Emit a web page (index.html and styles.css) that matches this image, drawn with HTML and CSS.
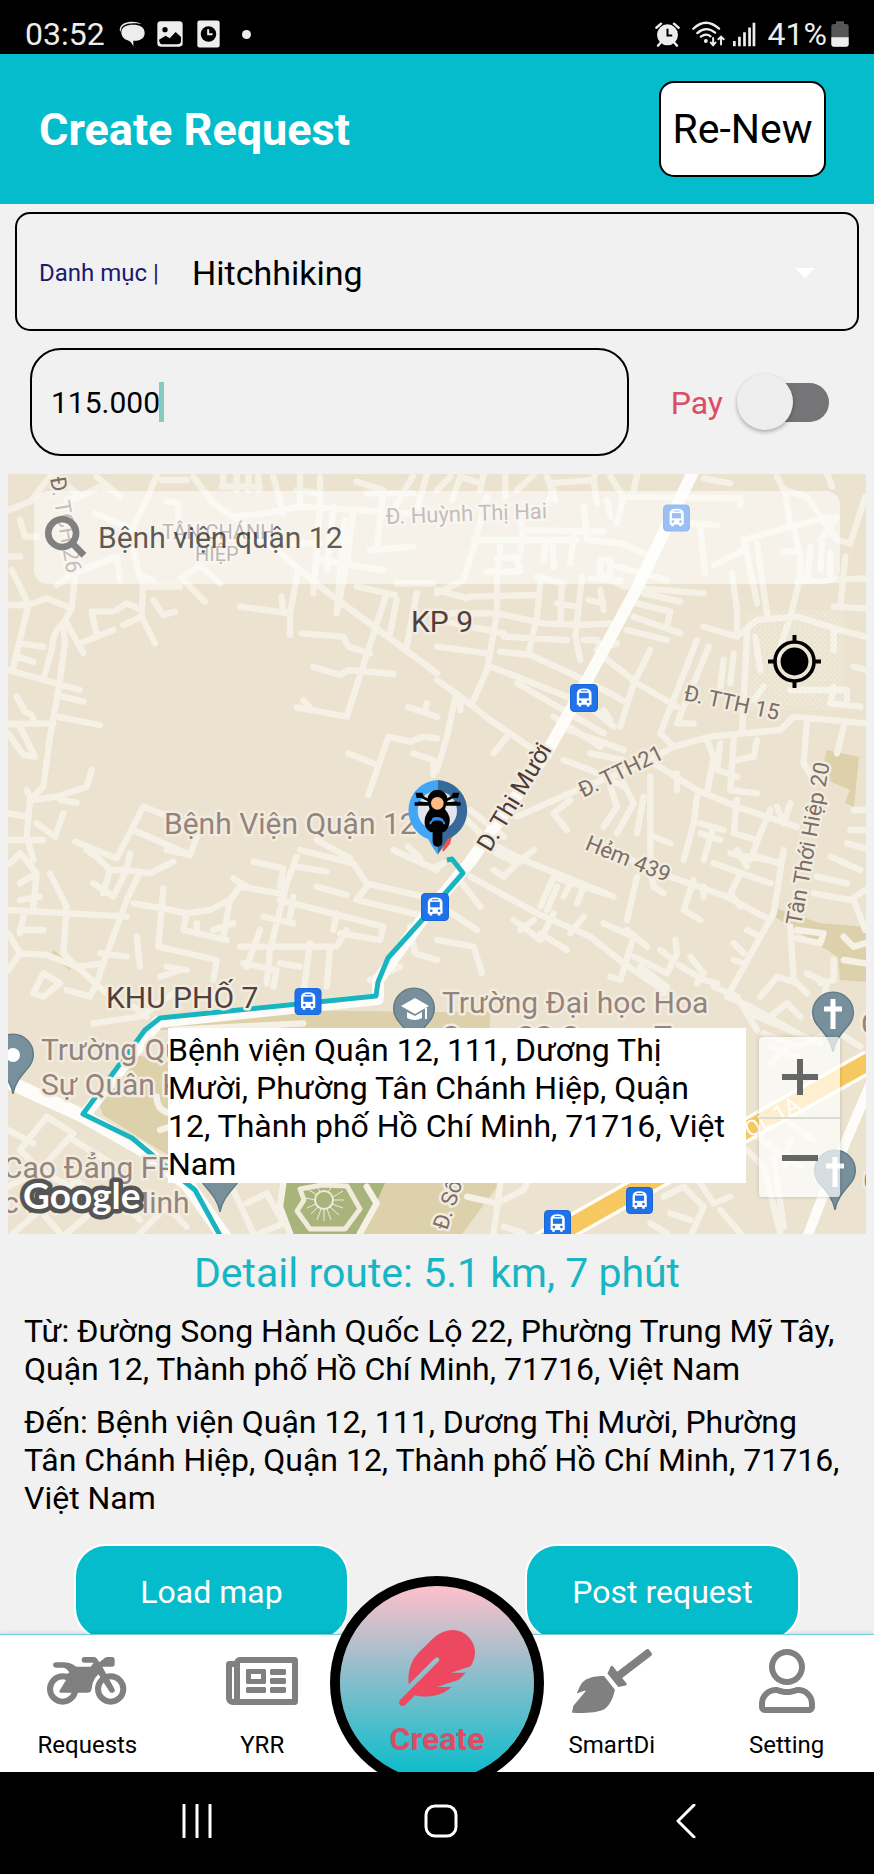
FILE: index.html
```html
<!DOCTYPE html>
<html lang="vi">
<head>
<meta charset="utf-8">
<meta name="viewport" content="width=device-width, initial-scale=1">
<title>Create Request</title>
<link rel="stylesheet" href="styles.css">
</head>
<body>
<div class="app">
  <div class="status">
    <div class="status-group">
      <span class="clock">03:52</span>
      <svg class="s-chat" viewBox="0 0 78 78" aria-hidden="true"><path d="M2 28C2 8 22 2 40 2C54 2 62 5 68 9C56 6 24 4 12 15C6 20 6 26 5 32Z"/><path d="M42 11C62 11 77 18 77 36C77 50 66 58 52 59L43 59L43 77C40 68 34 60 24 57C12 53 7 44 7 33C8 18 22 11 42 11Z"/></svg>
      <svg class="s-pic" viewBox="0 0 78 78" aria-hidden="true"><rect x="1" y="1" width="76" height="76" rx="10"/><circle cx="24" cy="26" r="8" fill="#000"/><path d="M6 56L26 44L38 52L56 33L72 48V60Q72 70 60 70H16Q8 70 6 56Z" fill="#000"/></svg>
      <svg class="s-rec" viewBox="0 0 68 82" aria-hidden="true"><rect x="1" y="1" width="66" height="80" rx="7"/><circle cx="34" cy="41" r="23" fill="#000"/><path d="M33 27V42H46" fill="none" stroke="#ededed" stroke-width="6"/></svg>
      <span class="s-dot"></span>
    </div>
    <div class="status-group right">
      <svg class="s-alarm" viewBox="0 0 72 74" aria-hidden="true"><circle cx="36" cy="38" r="31"/><path d="M3 17L17 5M69 17L55 5M17 60L8 70M55 60L64 70" stroke="#ededed" stroke-width="7" stroke-linecap="round"/><path d="M36 20V40H50" fill="none" stroke="#000" stroke-width="6"/></svg>
      <svg class="s-wifi" viewBox="0 0 100 76" aria-hidden="true"><g fill="none" stroke="#ededed" stroke-width="7" stroke-linecap="round"><path d="M4 22Q42 -14 82 22M16 35Q43 12 70 34M27 46Q43 34 56 45"/><path d="M64 50V72M57 64L64 72L71 64M88 70V46M80 54L88 46L96 54" stroke-width="6"/></g><circle cx="42" cy="59" r="6"/></svg>
      <svg class="s-signal" viewBox="0 0 68 74" aria-hidden="true"><path d="M0 56H8V72H0ZM15 44H23V72H15ZM30 30H38V72H30ZM45 16H53V72H45ZM58 2H66V72H58Z"/></svg>
      <span class="battery-text">41%</span>
      <svg class="s-batt" viewBox="0 0 54 78" aria-hidden="true"><path d="M15 1H39V9H46Q53 9 53 17V70Q53 77 46 77H8Q1 77 1 70V17Q1 9 8 9H15Z" fill="#565656"/><path d="M1 49H53V70Q53 77 46 77H8Q1 77 1 70Z"/></svg>
    </div>
  </div>

  <header class="topbar">
    <h1>Create Request</h1>
    <button class="renew" type="button">Re-New</button>
  </header>

  <main class="content">
    <div class="category">
      <label for="category">Danh mục |</label>
      <select id="category"><option>Hitchhiking</option></select>
      <span class="arrow" aria-hidden="true"></span>
    </div>

    <div class="price-row">
      <div class="price"><input id="price" type="text" value="115.000" aria-label="Price"><span class="caret"></span></div>
      <label class="pay" for="pay">Pay</label>
      <input class="switch" id="pay" type="checkbox">
    </div>

    <section class="map" aria-label="Map">
      <svg class="map-canvas" viewBox="8 474 858 760" preserveAspectRatio="xMidYMid slice">
        <defs>
          <symbol id="bus" viewBox="0 0 82 82">
            <rect width="82" height="82" rx="13" fill="#1967d9"/><rect x="3" y="3" width="76" height="76" rx="10" fill="#1f72ea"/>
            <path d="M20 28Q20 13 41 13Q63 13 63 28V61H57V66H49V61H33V66H25V61H20Z" fill="#fff"/>
            <path d="M27 26H55V42H27Z" fill="#1f72ea"/><circle cx="30" cy="52" r="4" fill="#1f72ea"/><circle cx="53" cy="52" r="4" fill="#1f72ea"/><path d="M32 20H51" stroke="#1f72ea" stroke-width="3"/>
          </symbol>
          <symbol id="pin" viewBox="0 0 128 186">
            <path d="M64 184C58 150 38 128 20 107C8 94 2 80 2 64A62 62 0 0 1 126 64C126 80 120 94 108 107C90 128 70 150 64 184Z" fill="#78909c" stroke="#5d7683" stroke-width="4"/>
          </symbol>
          <pattern id="mesh" width="5" height="5" patternUnits="userSpaceOnUse"><path d="M0 0L5 5M5 0L0 5" stroke="#fff" stroke-width="1" opacity=".25"/></pattern>
        </defs>
        <rect x="8" y="474" width="858" height="760" fill="#ebe3cf"/>

        <g fill="#ddd1ab">
          <path d="M827 750L859 757L854 807L845 803L850 790L820 777Z"/>
          <path d="M53 950L73 965L70 970L50 957Z"/>
          <path d="M270 1010L437 1012L490 1012V1030H160L158 1020Z"/>
          <path d="M98 1100L137 1055L168 1062V1155L103 1115Z"/>
          <path d="M820 923L866 927V982L840 980L838 957L775 917L778 909Z"/>
          <path d="M380 1183L500 1183L462 1234H360L375 1200Z"/>
        </g>
        <path d="M285 1183H385L362 1234H290L278 1205Z" fill="#a9b37c"/>

        <g class="road">
          <g transform="translate(0 470) scale(.33333)">
            <path d="M25 405L85 405L140 385L215 415L225 320M85 405L60 350L35 300M25 260H60M85 405L40 590M215 415L190 460Q160 480 155 540L130 630M190 460L195 520L175 660L150 800L130 950L90 990L80 1100L100 1170M200 460L250 550M335 425H275L290 495M240 520L340 480M350 420L380 400L425 420M370 465L425 440L465 520M430 320L425 440M460 390L490 435L525 425M25 600L240 660M170 675L250 695M60 520L130 530M55 560L100 575M25 762L160 760M170 740L300 765M50 680L75 725L95 735L105 760M25 790L70 855L105 860L60 770M80 960L95 990L170 980L260 950L275 900M180 990L230 998M25 1030L80 1040M190 1030L165 1100L110 1060M25 1110L130 1110M350 1165L430 1010L600 1075L570 1155L400 1080M225 1115L350 1165"/>
            <path d="M200 320Q320 270 350 260L360 330M170 345L210 320M440 350H540M545 325L615 395M545 325L600 285L660 340M400 240L420 320L460 330M720 410L870 430L895 300M845 380L850 425M870 430L870 495M905 490L1030 500L1045 530L1110 550M940 590L1020 615L1045 600L1180 612M890 712L1040 740L1160 370M910 690L930 715M1045 850L1130 885M1105 975L1165 800L1230 815L1270 800L1311 805M1225 712L1311 740M1280 700L1275 725M1240 850L1311 875M1300 880V915"/>
            <path d="M25 120L90 95L150 20M200 90L240 80L160 10M240 80L300 50L330 60M290 20L360 80M470 15L440 90L400 170M580 20L640 100L700 140L800 130L900 110L1150 125L1311 140M285 130L400 180M60 150L75 200L110 200M485 30H560M500 95L535 100V150M700 140L830 240L960 350L1311 610M665 50H780M670 15V50M710 15V60M745 15V60M775 15V60M820 20L850 130M900 20V110M890 60L960 70M960 20V110L940 370M880 220H960M1000 110L980 300M1035 150L1010 425M1060 120L1040 280L1010 430M1070 35L1150 60L1130 240M1240 15L1180 120M1280 15L1250 120M960 270L1150 300M1070 350L1185 375M1190 390L1170 490M1250 370L1220 530M1100 70H1240M1190 340H1300M1110 240L1240 230M950 1110L1050 1165M1225 1130L1260 1165"/>
          </g>
          <g transform="translate(437 470) scale(.33333)">
            <path d="M0 60L40 20M45 90L70 20L130 40M140 10L130 60M205 10V80M330 20L355 90M290 15L240 60M340 40L470 30L475 10M470 30L480 100M520 20L560 80L910 85V105M560 80L540 160M600 15L590 60M800 25L880 40M150 80L110 230L80 330L0 370M240 120L260 185L250 240M255 180L500 185M110 210H420M330 100L350 60M440 110L450 210M510 90L520 140M410 200L400 280M325 210L320 270M345 215L350 290M190 230L180 330M180 265L250 260M150 305L250 305L240 270M460 210L550 220L650 260M300 320L380 340M460 325L550 330M490 270V310L520 330L560 350L800 370M490 270H520V310M540 290L690 330M620 370L730 395M600 400L700 425L690 470M590 440L730 490M570 480L690 510M100 380L300 375M0 360L90 385M20 430H180L320 460L430 465L520 460M0 450L200 490M180 330V430L150 600L110 690M310 340L300 440L275 550M375 340L370 460M435 320L415 500L430 570M360 400L420 410M200 500L390 510M0 530L150 550M190 545L280 555L400 610L520 670L570 700M440 510H480L500 560L600 640L720 710M480 540L540 520M640 540L590 640L550 770M160 590L240 620L440 700M240 640L500 790M370 770L560 840M350 740L490 830M0 630L70 680L160 750L320 860M55 680L30 800L0 900M210 800L170 850M70 690V720M490 360L500 420M455 390L500 400M470 720L530 770M500 720L520 750"/>
            <path d="M780 510L670 790L710 830M815 530L720 760L770 760M860 570L850 650M890 550L880 640M710 830L820 800L1030 780L1070 740L1285 760M1110 750L1100 880L1130 930M1220 770L1200 850M915 790L930 480M800 470L900 500L960 450L1080 440L1210 480L1285 500M885 310L900 420V500M960 220L990 430M920 210L940 300L960 400M920 210L1060 170L1180 140M790 170L805 310M760 160L840 165M920 240L830 285M1060 170L1045 60L1110 80L1200 210L1240 220L1285 80M1040 60L1020 20M1170 10L1185 50M1070 170L1090 260V330M1120 230L1110 330M1155 220L1150 300M1180 250V320M1040 245H1080M1150 210L1200 140M1080 335L1285 325M1085 340L1060 440L1020 560M1225 260L1210 410M1190 410L1285 415M1190 480V540M1250 590L1285 600M1190 650L1180 700L1270 710M1060 660H1230V700M955 500L970 600M950 690L980 650"/>
            <path d="M240 1040L420 960L600 890L710 830M350 1030L400 990M350 1030L390 1080M380 870L460 900L560 950M460 850L560 870M560 940L590 1000L540 1090M520 950L540 1010L500 1070M640 920V1170M620 980L600 1090M650 880L780 960L900 1010L1080 1070M780 980L770 1060L740 1170M720 910V960M810 810L830 860L810 970M850 820L840 900L900 920M890 810L880 960L960 970M960 810L950 860L900 870M900 990L890 1090L960 1110M1000 1020L970 1090L940 1170M790 1060L860 1080M790 1090L850 1110M830 1070L800 1170M1060 1000L1040 1060L1020 1010M880 1150L990 1170M650 1100L700 1120M1250 1020H1285M1240 1080H1285M1230 1120L1285 1135M100 1020L200 1100M80 1040L160 1120L260 1170"/>
          </g>
          <g transform="translate(0 850) scale(.33333)">
            <path d="M70 20L110 70L60 100M25 180L380 200M110 70L100 170M150 70L200 170L190 310L230 350L320 430M25 250L60 310L140 315M60 310L25 360M140 315L230 350L310 340M260 0L290 20L330 60H380L390 10M330 60L310 130M280 100L340 140L380 60L450 70L520 35M420 65L380 150L310 340L290 400M490 115L475 290L650 330L640 390M400 160L490 175L560 190L630 180L690 150L720 110L840 130M700 85L740 110M560 190L550 240L680 270M690 150L670 260M890 20L860 100L810 300L800 400M760 35L850 55L840 110M890 50L980 65M840 150L1150 230L1140 270L1020 250M950 110L1040 135M900 0L1060 40L1100 100L1311 150M1180 0L1311 60M1100 110L1070 150L1280 200M720 290H1010L1040 240M780 240L740 350M930 280L910 430M990 300L980 410M730 340L830 360L820 410M840 340L900 350M410 260L420 350M300 310L380 320M500 350L560 360M480 380L540 360M130 370L180 400L130 440L100 430L130 370M200 420L270 440L290 400M60 240L130 240M70 200L60 250M640 240L700 220M590 220V250M790 200L880 220M880 140L870 200M1010 190L1000 240M400 470L440 500M280 520L420 500L520 430M500 0L570 15M30 40L60 10M60 150L120 140M1230 230L1245 310L1311 330M1110 390L1200 350"/>
            <path d="M25 840L100 880M60 900L140 800L220 850L120 960ZM220 870L350 950M25 1010L120 960L210 1010M150 1060L230 990L330 1080M200 1150L340 1030L420 1110M40 1150L120 1080L180 1150M420 1150L500 1070L560 1130M470 740Q470 780 510 790M510 830L480 840M700 1020L760 1150M740 1060L800 1030L850 1120L780 1150M520 540L910 520M850 1000L840 1070L870 1150M1100 1010L1130 1060L1080 1150"/>
          </g>
          <g transform="translate(437 850) scale(.33333)">
            <path d="M60 80L130 170M0 160L120 240M100 80L300 190L460 260L560 340L680 420M180 10L240 40L200 80L170 60M240 40L290 0M260 30L530 140M310 170L350 80L500 130M330 180L360 110M380 140L400 100M420 160L440 110M230 210L310 270L350 190M250 240L290 210M310 250L390 300M400 250L440 200M500 220L590 260L550 390L520 380M570 240L630 290M600 80L570 210M640 60L650 110L680 130M560 20L700 80L870 140L1000 210M770 90L740 180L790 210M800 110V140M910 70L880 130L910 170M830 40L1000 100M1040 0L1010 190L870 440M900 0L930 50M960 20L1030 40M590 320L690 370L720 310L715 270M670 300L710 330M610 350L690 410L680 430M760 320L800 370L780 400M725 345L800 390L840 400M930 240L970 260M890 280L920 310M890 330L920 340M870 440L940 470L1100 560M830 410L900 440L960 540M1060 230L1070 390L1110 430M1080 240L1160 250L1150 280L1080 265M1220 260L1250 290L1285 280M1180 20L1270 60M1140 80L1230 100M1130 130L1240 150L1285 120M1250 150L1285 240M1220 330L1285 340M1190 330V390L1150 400M1110 370L1170 400L1160 440M970 440L1020 380L1080 400M1000 500L1050 460L1090 500M940 490L1150 580M980 550L1080 590L1150 560M1000 590L1080 620M0 270L110 290L135 370M1000 640L1060 580M1130 500L1270 590M0 50L20 40"/>
            <path d="M170 1150L190 1000M90 1040L180 1060L260 1020L270 1000M200 1130L260 1150M680 1040L740 1010L800 1070L760 1160M790 1000L830 1060L880 1040M700 1090L760 1110M930 900L980 950L1030 1150M1010 920L1040 1130M1060 870L1040 950M1060 820L1130 870M960 860L1090 950M640 1120L690 1150M850 1080L910 1150"/>
          </g>
        </g>

        <path d="M300 1189L322 1185L347 1186L360 1209L345 1229H310L297 1211L304 1200Z" fill="#a9b37c" stroke="#f1ebdc" stroke-width="5" stroke-linejoin="round"/>
        <g stroke="#f1ebdc" stroke-width="1" fill="none"><circle cx="324" cy="1200" r="9" fill="#a9b37c" stroke-width="2"/><path d="M315 1200L306 1198M316 1204L307 1208M318 1207L311 1214M321 1209L317 1220M324 1209V1221M327 1209L331 1220M330 1207L339 1215M332 1204L343 1208M333 1200L344 1200M333 1197L343 1191M317 1195L309 1190M320 1192L318 1188M328 1192L331 1188"/></g>

        <g fill="none" stroke-linejoin="round">
          <path d="M694 470L636 590L584 686L546 754L470 862L424 917L378 980V999L158 1022L83 1117" stroke="#fdfcf8" stroke-width="12"/>
          <path d="M0 1078L83 1116L143 1150L187 1184L227 1240" stroke="#fdfcf8" stroke-width="14"/>
          <path d="M806 1240L824 1193L870 1085" stroke="#fdfcf8" stroke-width="10"/>
          <path d="M540 1244L653 1180L750 1128L870 1061" stroke="#fffdf5" stroke-width="24"/>
          <path d="M540 1244L653 1180L750 1128L870 1061" stroke="#f8c860" stroke-width="17"/>
          <path d="M447 860L452 859L463 873L422 920L388 958L378 982L376 996L160 1018L145 1030L83 1114L132 1138L180 1178L195 1190L222 1239" stroke="#18b5c1" stroke-width="5"/>
        </g>

        <g class="poi-pins">
          <use href="#pin" x="393" y="987" width="42" height="62"/><path d="M401 1006L415 998L429 1006L415 1014ZM407 1012V1018Q415 1022 422 1018V1012L415 1016Z" fill="#fff"/><path d="M426 1008V1019" stroke="#fff" stroke-width="2"/>
          <use href="#pin" x="812" y="991" width="42" height="62"/><path d="M833 999V1029M824 1009H842" stroke="#fff" stroke-width="5"/>
          <use href="#pin" x="814" y="1149" width="42" height="62"/><path d="M835 1157V1187M826 1166H844" stroke="#fff" stroke-width="5"/>
          <use href="#pin" x="-8" y="1033" width="42" height="62"/><circle cx="13" cy="1055" r="7" fill="#fff"/>
          <use href="#pin" x="199" y="1151" width="42" height="62"/>
        </g>
        <use href="#bus" x="663" y="504" width="27" height="28"/>
        <use href="#bus" x="570" y="684" width="28" height="28"/>
        <use href="#bus" x="421" y="893" width="28" height="28"/>
        <use href="#bus" x="294" y="988" width="28" height="27"/>
        <use href="#bus" x="626" y="1187" width="27" height="27"/>
        <use href="#bus" x="544" y="1210" width="27" height="27"/>
        <rect x="745" y="610" width="100" height="100" fill="url(#mesh)"/>

        <g class="map-text">
          <text class="place" x="411" y="632">KP 9</text>
          <text class="place" x="106" y="1008">KHU PHỐ 7</text>
          <text class="poi" x="164" y="834">Bệnh Viện Quận 12</text>
          <text class="poi" x="442" y="1013">Trường Đại học Hoa</text>
          <text class="poi" x="442" y="1047">Sen - CS Quang Trung</text>
          <text class="poi" x="41" y="1060">Trường Quân</text>
          <text class="poi" x="41" y="1095">Sự Quân Khu 7</text>
          <text class="poi" x="3" y="1178">Cao Đẳng FPT</text>
          <text class="poi" x="3" y="1213">c Hồ Chí Minh</text>
          <text class="poi" x="861" y="1034">C</text>
          <text class="poi" x="863" y="1191">C</text>
          <text class="area" x="162" y="539">TÂN CHÁNH</text>
          <text class="area" x="195" y="561">HIỆP</text>
          <text class="street" transform="translate(386 524) rotate(-2)">Đ. Huỳnh Thị Hai</text>
          <text class="street" transform="translate(50 478) rotate(80)">Đ. TCH 26</text>
          <text class="street" transform="translate(683 700) rotate(12)">Đ. TTH 15</text>
          <text class="street" transform="translate(583 798) rotate(-26)">Đ. TTH21</text>
          <text class="street" transform="translate(584 849) rotate(22)">Hẻm 439</text>
          <text class="street" transform="translate(801 926) rotate(-80)">Tân Thới Hiệp 20</text>
          <text class="street dark" transform="translate(490 853) rotate(-59)">D. Thị Mười</text>
          <text class="street" transform="translate(447 1231) rotate(-72)">Đ. Số 5</text>
          <text class="route" transform="translate(750 1138) rotate(-29)">QL 1A</text>
        </g>

        <path d="M449 829L443 848Q441 852 444 851L450 844L454 829Z" fill="#ef5350"/>
        <g transform="translate(380 760) scale(.33333)">
          <path d="M173 60A92 92 0 0 0 145 238Q156 262 173 284Z" fill="#42a5f5"/><path d="M173 60A92 92 0 0 1 202 238Q190 262 173 284Z" fill="#37699a"/>
          <circle cx="172" cy="152" r="59" fill="#e4e4ed"/>
          <path d="M115 128L150 132M231 128L194 132M115 105L148 122M229 105L196 122" stroke="#000" stroke-width="8"/><path d="M106 98H127L133 114H110ZM238 98H219L212 114H234ZM104 127H147V137H104ZM197 127H242V137H197Z"/>
          <path d="M142 120A29 29 0 0 1 203 120L195 148Q214 170 208 192Q203 211 191 217H153Q137 208 134 192Q131 170 149 148Z"/>
          <circle cx="172" cy="130" r="19" fill="#ffb983"/><path d="M157 178Q172 170 188 180" fill="none" stroke="#328ce0" stroke-width="7"/><path d="M151 193Q151 180 172 178Q193 180 193 193" fill="none" stroke="#328ce0" stroke-width="6"/>
          <rect x="158" y="188" width="29" height="72" rx="14"/>
        </g>
        <text class="google" x="23" y="1209">Google</text>
      </svg>

      <div class="search">
        <svg viewBox="0 0 130 130" aria-hidden="true"><circle cx="52" cy="52" r="42"/><path d="M82 82L118 119"/></svg>
        <input type="text" value="Bệnh viện quận 12" aria-label="Search place">
      </div>
      <button class="locate" type="button" aria-label="My location">
        <svg viewBox="0 0 160 160"><circle cx="80" cy="80" r="42"/><circle cx="80" cy="80" r="59" fill="none" stroke="#000" stroke-width="11"/><path d="M80 0V20M80 140V160M0 80H20M140 80H160" stroke="#000" stroke-width="12"/></svg>
      </button>
      <div class="address">Bệnh viện Quận 12, 111, Dương Thị Mười, Phường Tân Chánh Hiệp, Quận 12, Thành phố Hồ Chí Minh, 71716, Việt Nam</div>
      <div class="zoom">
        <button type="button" aria-label="Zoom in"><svg viewBox="0 0 36 36"><path d="M0 18H36M18 0V36"/></svg></button>
        <button type="button" aria-label="Zoom out"><svg viewBox="0 0 36 36"><path d="M0 18H36"/></svg></button>
      </div>
    </section>

    <h2 class="route-title">Detail route: 5.1 km, 7 phút</h2>
    <div class="details">
      <p>Từ: Đường Song Hành Quốc Lộ 22, Phường Trung Mỹ Tây, Quận 12, Thành phố Hồ Chí Minh, 71716, Việt Nam</p>
      <p>Đến: Bệnh viện Quận 12, 111, Dương Thị Mười, Phường Tân Chánh Hiệp, Quận 12, Thành phố Hồ Chí Minh, 71716, Việt Nam</p>
    </div>
    <div class="actions">
      <button type="button">Load map</button>
      <button type="button">Post request</button>
    </div>
  </main>

  <nav class="tabs">
    <a href="#requests"><svg viewBox="144 358 240 192" aria-hidden="true"><g fill="none" stroke="#808080" stroke-width="18"><circle cx="191" cy="478" r="38"/><circle cx="335" cy="478" r="38"/></g><path d="M170 398H192Q215 398 232 411H275L284 399H256Q248 399 248 391Q248 382 256 382H285Q291 382 294 387L301 398L318 384Q320 382 325 382H339Q347 382 347 390V403Q347 411 339 411H310L346 477Q350 484 344 488Q337 492 332 486L298 434Q285 446 281 460L277 482Q275 489 267 489H186Q180 489 181 484L207 441Q199 430 211 429Q205 415 192 414H170Q162 413 162 406Q162 399 170 398Z"/></svg><span>Requests</span></a>
    <a href="#yrr"><svg viewBox="0 0 576 512" aria-hidden="true"><path d="M552 64H112c-20.858 0-38.643 13.377-45.248 32H24c-13.255 0-24 10.745-24 24v272c0 30.928 25.072 56 56 56h496c13.255 0 24-10.745 24-24V88c0-13.255-10.745-24-24-24zM48 392V144h16v248c0 4.411-3.589 8-8 8s-8-3.589-8-8zm480 8H111.422c.374-2.614.578-5.283.578-8V112h416v288zM172 280h136c6.627 0 12-5.373 12-12v-96c0-6.627-5.373-12-12-12H172c-6.627 0-12 5.373-12 12v96c0 6.627 5.373 12 12 12zm28-80h80v40h-80v-40zm-40 140v-24c0-6.627 5.373-12 12-12h136c6.627 0 12 5.373 12 12v24c0 6.627-5.373 12-12 12H172c-6.627 0-12-5.373-12-12zm192 0v-24c0-6.627 5.373-12 12-12h104c6.627 0 12 5.373 12 12v24c0 6.627-5.373 12-12 12H364c-6.627 0-12-5.373-12-12zm0-144v-24c0-6.627 5.373-12 12-12h104c6.627 0 12 5.373 12 12v24c0 6.627-5.373 12-12 12H364c-6.627 0-12-5.373-12-12zm0 72v-24c0-6.627 5.373-12 12-12h104c6.627 0 12 5.373 12 12v24c0 6.627-5.373 12-12 12H364c-6.627 0-12-5.373-12-12z"/></svg><span>YRR</span></a>
    <div class="create-slot"><a class="create" href="#create"><svg viewBox="0 0 512 512" aria-hidden="true"><path d="M467.14 44.84c-62.55-62.48-161.67-64.78-252.28 25.73-78.61 78.52-60.98 60.92-85.75 85.66-60.46 60.39-70.39 150.83-63.79 211.17l178.44-178.25c6.26-6.25 16.4-6.25 22.65 0s6.25 16.38 0 22.63L7.04 471.03c-9.38 9.37-9.38 24.57 0 33.94 9.38 9.37 24.6 9.37 33.98 0l66.1-66.03C159.42 454.65 279 457.11 353.95 384h-98.19l147.57-49.14c49.99-49.93 36.38-36.18 46.31-46.86h-97.78l131.54-43.8c45.44-74.46 34.31-148.84-16.26-199.36z"/></svg><span>Create</span></a></div>
    <a href="#smartdi"><svg viewBox="0 0 640 512" aria-hidden="true"><path d="M256.47 216.77l86.73 109.18s-16.6 102.36-76.57 150.12C206.66 523.85 0 510.19 0 510.19s3.8-23.14 11-55.43l94.62-112.17c3.97-4.7-.87-11.62-6.65-9.5l-60.4 22.09c14.44-41.66 32.72-80.04 54.6-97.47 59.97-47.76 163.3-40.94 163.3-40.94zM636.53 31.03l-19.86-25c-5.49-6.9-15.52-8.05-22.41-2.56l-232.48 177.8-34.14-42.97c-5.09-6.41-15.14-5.21-18.59 2.21l-25.33 54.55 86.73 109.18 58.8-12.45c8-1.69 11.42-11.2 6.34-17.6l-34.09-42.92 232.48-177.8c6.89-5.48 8.04-15.53 2.55-22.44z"/></svg><span>SmartDi</span></a>
    <a href="#setting"><svg viewBox="0 0 448 512" aria-hidden="true"><path d="M313.6 304c-28.7 0-42.5 16-89.6 16-47.1 0-60.8-16-89.6-16C60.2 304 0 364.2 0 438.4V464c0 26.5 21.5 48 48 48h352c26.5 0 48-21.5 48-48v-25.6c0-74.2-60.2-134.4-134.4-134.4zM400 464H48v-25.6c0-47.6 38.8-86.4 86.4-86.4 14.6 0 38.3 16 89.6 16 51.7 0 74.9-16 89.6-16 47.6 0 86.4 38.8 86.4 86.4V464zM224 288c79.5 0 144-64.5 144-144S303.5 0 224 0 80 64.5 80 144s64.5 144 144 144zm0-240c52.9 0 96 43.1 96 96s-43.1 96-96 96-96-43.1-96-96 43.1-96 96-96z"/></svg><span>Setting</span></a>
  </nav>

  <div class="sysnav">
    <button type="button" aria-label="Recent apps"><svg viewBox="0 0 34 34"><path d="M4 1V33M17 1V33M30 1V33"/></svg></button>
    <button type="button" aria-label="Home"><svg viewBox="0 0 34 34"><rect x="2" y="2" width="30" height="30" rx="9"/></svg></button>
    <button type="button" aria-label="Back"><svg viewBox="0 0 34 34"><path d="M25 1L9 17L25 33"/></svg></button>
  </div>
</div>
</body>
</html>
```

FILE: styles.css
```css
* { box-sizing: border-box; }

body {
  margin: 0;
  background: #f1f1f1;
  color: #000;
  font-family: Roboto, "Liberation Sans", sans-serif;
}

button, input, select { font: inherit; color: inherit; }
button { padding: 0; border: 0; background: none; cursor: pointer; }
input, select { padding: 0; border: 0; background: none; outline: 0; }
a { color: inherit; text-decoration: none; }
h1, h2, p { margin: 0; }
svg { display: block; flex: none; }

.app { display: flex; flex-direction: column; height: 100vh; }

/* Status bar */
.status {
  flex: none;
  display: flex;
  justify-content: space-between;
  height: 54px;
  padding: 14px 25px 0;
  background: #000;
  color: #ededed;
  font-size: 32px;
  line-height: 40px;
}
.status svg { fill: #ededed; }
.status-group { display: flex; align-items: center; }
.s-chat { width: 26px; height: 26px; margin-left: 14px; }
.s-pic { width: 26px; height: 26px; margin-left: 12px; }
.s-rec { width: 23px; height: 28px; margin-left: 14px; }
.s-dot { width: 9px; height: 9px; margin-left: 22px; border-radius: 50%; background: #ededed; }
.s-alarm { width: 25px; height: 25px; }
.s-wifi { width: 33px; height: 26px; margin-left: 12px; }
.s-signal { width: 23px; height: 25px; margin-left: 8px; }
.battery-text { margin-left: 12px; }
.s-batt { width: 18px; height: 26px; margin-left: 4px; }

/* Header */
.topbar {
  flex: none;
  display: flex;
  align-items: center;
  justify-content: space-between;
  height: 150px;
  padding: 0 48px 0 39px;
  background: #05bccc;
}
.topbar h1 { padding-top: 2px; color: #fff; font-size: 45px; line-height: 52px; font-weight: 700; }
.renew {
  width: 167px;
  height: 96px;
  border: 2px solid #000;
  border-radius: 15px;
  background: #fff;
  font-size: 41px;
}

.content { flex: 1; min-height: 0; overflow: hidden; padding-top: 8px; }

/* Form */
.category {
  display: flex;
  align-items: center;
  height: 119px;
  margin: 0 15px;
  padding: 2px 42px 0 22px;
  border: 2px solid #000;
  border-radius: 15px;
}
.category label { width: 153px; color: #191970; font-size: 24px; }
.category select { flex: 1; appearance: none; font-size: 34px; line-height: 40px; }
.arrow { border: solid transparent; border-width: 10px 10px 0; border-top-color: #fff; }

.price-row { display: flex; align-items: center; margin-top: 17px; padding: 0 45px 0 30px; }
.price {
  flex: 1;
  display: flex;
  align-items: center;
  height: 108px;
  padding-left: 19px;
  border: 2px solid #000;
  border-radius: 31px;
}
.price input { width: 108px; font-size: 30px; }
.caret { width: 5px; height: 40px; background: #84cbc1; }
.pay { margin: 0 14px 0 42px; padding-top: 2px; color: #dc4c64; font-size: 32px; }
.switch {
  appearance: none;
  position: relative;
  display: flex;
  align-items: center;
  width: 92px;
  height: 56px;
  margin: 0;
}
.switch::after {
  content: "";
  order: 2;
  flex: none;
  width: 72px;
  height: 39px;
  margin-left: -36px;
  border-radius: 20px;
  background: #757577;
}
.switch::before {
  content: "";
  position: relative;
  z-index: 1;
  flex: none;
  width: 56px;
  height: 56px;
  border-radius: 50%;
  background: #eee;
  box-shadow: 0 2px 4px rgba(0, 0, 0, .3);
}

/* Map */
.map { position: relative; height: 760px; margin: 18px 8px 0; overflow: hidden; }
.map-canvas { width: 100%; height: 100%; }
.road path { fill: none; stroke: #f6f1e6; stroke-width: 19; stroke-linecap: round; stroke-linejoin: round; }
.map-text text { paint-order: stroke; stroke: #f2ecdf; stroke-width: 5px; stroke-linejoin: round; }
.map-text .place { fill: #523f3c; font-size: 30px; }
.map-text .poi { fill: #94847d; font-size: 30px; }
.map-text .area { fill: #6c5c58; font-size: 20px; }
.map-text .street { fill: #7c6d66; font-size: 22px; }
.map-text .dark { fill: #4e3b38; font-size: 24px; }
.map-text .route { fill: #fff; stroke: none; font-size: 22px; }
.google { fill: #fff; stroke: #555; stroke-width: 9px; stroke-linejoin: round; paint-order: stroke; font-family: Lato, sans-serif; font-weight: 700; font-size: 37px; }

.search {
  position: absolute;
  top: 17px;
  left: 26px;
  right: 26px;
  display: flex;
  align-items: center;
  gap: 10px;
  height: 93px;
  padding-left: 11px;
  border-radius: 14px;
  background: rgba(255, 255, 255, .55);
}
.search svg { width: 43px; height: 43px; fill: none; stroke: #808080; stroke-width: 20; }
.search input { flex: 1; min-width: 0; font-size: 30px; color: rgba(0, 0, 0, .65); }
.locate { position: absolute; top: 161px; right: 45px; }
.locate svg { width: 53px; height: 53px; }
.address {
  position: absolute;
  left: 160px;
  right: 120px;
  bottom: 51px;
  padding: 3px 14px 0 0;
  background: #fff;
  font-size: 32px;
  line-height: 38px;
}
.zoom {
  position: absolute;
  right: 26px;
  bottom: 37px;
  display: flex;
  flex-direction: column;
  width: 81px;
  border-radius: 3px;
  background: rgba(255, 255, 255, .7);
  box-shadow: 0 0 4px rgba(0, 0, 0, .18);
}
.zoom button { display: flex; align-items: center; justify-content: center; height: 80px; }
.zoom button + button { border-top: 2px solid #dcdad5; }
.zoom svg { width: 36px; height: 36px; stroke: #666; stroke-width: 6; }

/* Route details */
.route-title { margin-top: 15px; color: #18b5c4; font-size: 41px; line-height: 48px; font-weight: 400; text-align: center; }
.details { display: flex; flex-direction: column; gap: 15px; padding: 15px 24px 0; font-size: 32px; line-height: 38px; }
.actions { display: grid; grid-template-columns: 1fr 1fr; gap: 176px; padding: 27px 74px 0; }
.actions button {
  height: 96px;
  border: 2px solid #fff;
  border-radius: 32px;
  background: #05bccc;
  color: #fff;
  font-size: 32px;
}

/* Tabs */
.tabs {
  flex: none;
  position: relative;
  display: grid;
  grid-template-columns: repeat(5, 1fr);
  height: 138px;
  padding-top: 14px;
  border-top: 1px solid #6fd0d8;
  background: #fff;
  box-shadow: 0 -1px 4px rgba(0, 0, 0, .12);
  font-size: 24px;
  line-height: 28px;
}
.tabs a { display: flex; flex-direction: column; align-items: center; gap: 18px; }
.tabs svg { height: 64px; fill: #808080; }
.create-slot { position: relative; }
.tabs .create {
  position: absolute;
  top: -73px;
  left: 50%;
  width: 214px;
  height: 214px;
  margin-left: -107px;
  padding-top: 44px;
  gap: 15px;
  border: 10px solid #000;
  border-radius: 50%;
  background: linear-gradient(#ffc0cb, #05bccc) padding-box;
  color: #dc4c64;
  font-size: 32px;
  line-height: 36px;
  font-weight: 700;
}
.tabs .create svg { width: 76px; height: 76px; fill: #ee4860; }

/* System navigation */
.sysnav {
  flex: none;
  position: relative;
  display: grid;
  grid-template-columns: repeat(3, 1fr);
  height: 102px;
  padding: 0 66px 4px 75px;
  background: #000;
}
.sysnav button { display: flex; align-items: center; justify-content: center; }
.sysnav svg { width: 34px; height: 34px; fill: none; stroke: #fff; stroke-width: 3; stroke-linecap: round; stroke-linejoin: round; }
```
